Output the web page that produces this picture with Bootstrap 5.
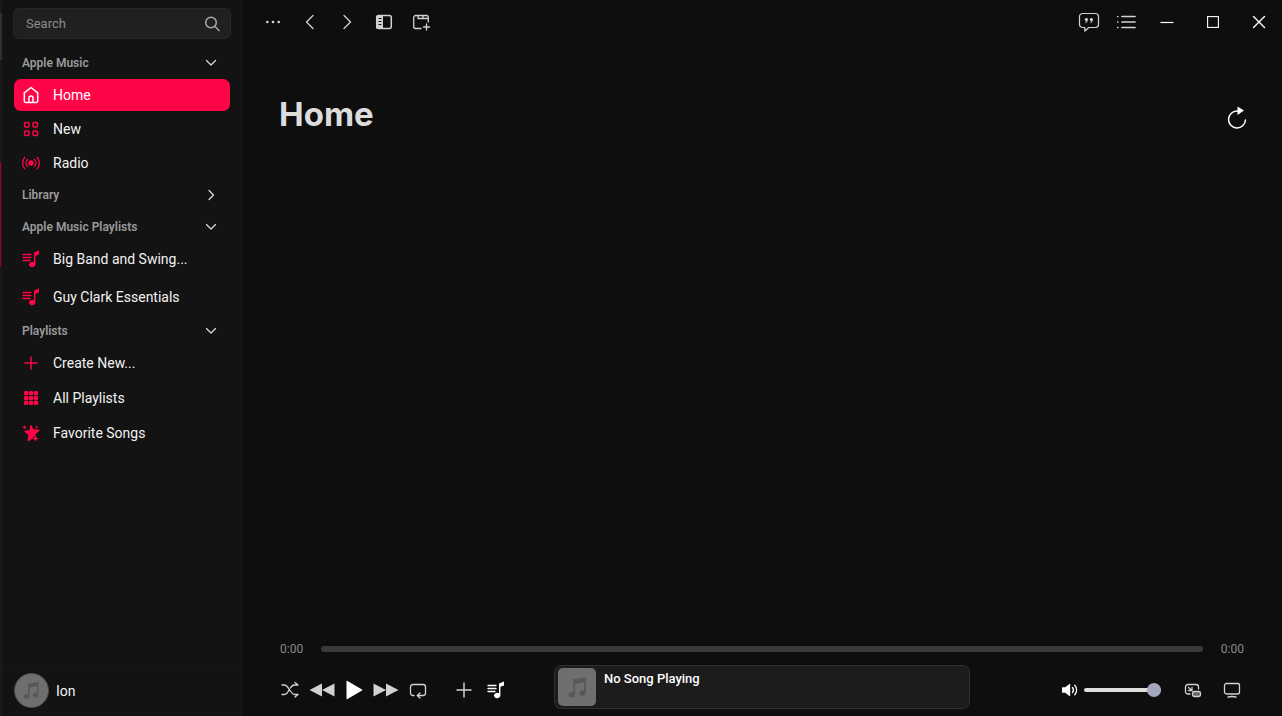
<!DOCTYPE html>
<html lang="en" data-bs-theme="dark">
<head>
<meta charset="utf-8">
<meta name="viewport" content="width=device-width, initial-scale=1">
<title>Music</title>
<link href="https://cdn.jsdelivr.net/npm/bootstrap@5.3.0/dist/css/bootstrap.min.css" rel="stylesheet">
<style>
:root { --accent: #ff0548; --side: #131313; --bg: #0e0e0e; }
body { font-family: Roboto, Inter, sans-serif; background: var(--bg); color: #dcdcdc; font-size: 14px; line-height: 20px; }
svg { display: block; flex: none; fill: none; stroke: currentColor; stroke-width: 1.5; stroke-linecap: round; stroke-linejoin: round; }
svg .solid { fill: currentColor; stroke: none; }
.window-edge { width: 2px; background: linear-gradient(#1a1a1a 13px, #303030 13px 60px, #1a1a1a 60px 162px, transparent 162px 266px, #1a1a1a 266px), linear-gradient(90deg, #a3001f 1px, #1a1a1a 1px); }
.sidebar { width: 240px; background: var(--side); border-right: 1px solid #171717; }
.search-box { height: 31px; margin: 8px 10px 8px 11px; padding: 0 10px 0 12px; background: #202020; border: 1px solid #272727; border-radius: 6px; color: #aaa; }
.search-box input { font-size: 13px; color: #ccc; outline: 0; }
.search-box input::placeholder { color: #8d8d8d; opacity: 1; }
.section-head { height: 32px; padding: 0 24px 0 20px; color: #9a9a9a; font-size: 12px; font-weight: 600; border: 0; background: none; }
.section-head svg { color: #dedede; }
.side-list { padding: 0 11px 0 12px; gap: 3px; }
.side-list-main { gap: 2px; }
.side-list-wide { gap: 6px; padding-bottom: 2px; }
.side-link { height: 32px; padding: 0 8px; gap: 13px; color: #f2f2f2; border-radius: 7px; text-decoration: none; }
.side-link svg { color: var(--accent); }
.side-link.active { background: var(--accent); color: #fff; }
.side-link.active svg { color: #fff; }
.account { height: 52px; padding: 0 12px; gap: 7px; border-top: 1px solid #171717; color: #f2f2f2; }
.avatar { width: 35px; height: 35px; background: #6f6f6f; border: 1px solid #4c4c4c; color: #585858; }
.icon-btn { width: 37px; height: 44px; padding: 0; border: 0; background: none; color: #d2d2d2; display: flex; align-items: center; justify-content: center; }
.win-btn { width: 46px; color: #fff; }
.ctl { width: 32px; height: 32px; }
.page-head { padding: 48px 29px 0 37px; }
.page-head h1 { font-family: Inter, sans-serif; font-size: 33px; line-height: 44px; font-weight: 700; color: #dcdcdc; }
.player { padding: 0 38px 7px; }
.seek-row { gap: 18px; font-size: 12px; line-height: 16px; color: #8a8a8a; }
.slider { appearance: none; height: 6px; border-radius: 3px; background: #3a3a3c; margin: 0; }
.slider::-webkit-slider-thumb { appearance: none; width: 0; height: 0; }
.volume { width: 77px; height: 4px; background: #dededc; }
.volume::-webkit-slider-thumb { width: 14px; height: 14px; border-radius: 50%; background: #a5a8bd; }
.deck { display: grid; grid-template-columns: minmax(0, 1fr) minmax(200px, 416px) minmax(0, 1fr); margin-top: 8px; align-items: center; }
.deck-left, .deck-right { padding-top: 6px; }
.deck-left { margin-left: -6px; }
.deck-right { margin-right: -4px; }
.now-playing { height: 44px; padding: 2px 3px; gap: 8px; background: #1c1c1c; border: 1px solid #303030; border-radius: 7px; color: #fff; font-size: 13px; font-weight: 500; line-height: 22px; }
.cover { width: 38px; height: 38px; border-radius: 5px; background: #6f6f6f; color: #585858; }
</style>
</head>
<body class="vh-100 d-flex overflow-hidden">
<svg class="d-none" xmlns="http://www.w3.org/2000/svg">
  <symbol id="note" viewBox="0 0 24 24"><path class="solid" d="M8 4.200 20 2v15.200a3.200 2.700 0 1 1-1.700-2.300V7L9.700 8.500v10.300a3.200 2.700 0 1 1-1.700-2.300z"/></symbol>
  <symbol id="tracks" viewBox="0 0 18 18"><path d="M1 4.500h8M1 7.500h8M1 10.500h7" stroke-width="1.300"/><path class="solid" d="M12 2.500 17 .5v4l-3.600 1.300v8.700a3.200 2.700 0 1 1-1.400-2.200z"/></symbol>
  <symbol id="down" viewBox="0 0 12 12"><path d="m1.500 3.500 4.500 4.500 4.500-4.500" stroke-width="1.200"/></symbol>
</svg>

<div class="window-edge"></div>
<aside class="sidebar d-flex flex-column flex-shrink-0">
  <label class="search-box d-flex align-items-center">
    <input type="search" class="border-0 bg-transparent p-0 flex-grow-1" style="min-width:0" placeholder="Search" aria-label="Search">
    <svg width="16" height="16" viewBox="0 0 16 16"><circle cx="7" cy="6.500" r="5.300"/><path d="m11 10.500 4 4"/></svg>
  </label>
  <nav class="d-flex flex-column flex-grow-1">
    <button class="section-head d-flex align-items-center justify-content-between">Apple Music <svg width="12" height="12"><use href="#down"/></svg></button>
    <div class="side-list side-list-main d-flex flex-column">
      <a href="#" class="side-link active d-flex align-items-center"><svg width="18" height="18" viewBox="0 0 18 18"><path d="M2.300 6.800 9 1.500l6.700 5.300v8.200a1.500 1.500 0 0 1-1.500 1.500H3.800A1.500 1.500 0 0 1 2.300 15z"/><path d="M7 16v-4a2 2 0 0 1 4 0v4"/></svg>Home</a>
      <a href="#" class="side-link d-flex align-items-center"><svg width="18" height="18" viewBox="0 0 18 18"><rect x="2.500" y="2.500" width="4.500" height="4.500" rx="1"/><rect x="11" y="2.500" width="4.500" height="4.500" rx="1"/><rect x="2.500" y="11" width="4.500" height="4.500" rx="1"/><rect x="11" y="11" width="4.500" height="4.500" rx="1"/></svg>New</a>
      <a href="#" class="side-link d-flex align-items-center"><svg width="18" height="18" viewBox="0 0 18 18"><circle class="solid" cx="9" cy="9" r="2.700"/><path d="M5.500 5.500a5 5 0 0 0 0 7M12.500 5.500a5 5 0 0 1 0 7M2.700 3.300a9 9 0 0 0 0 11.400M15.300 3.300a9 9 0 0 1 0 11.400" stroke-width="1.300"/></svg>Radio</a>
    </div>
    <button class="section-head d-flex align-items-center justify-content-between">Library <svg width="12" height="12" viewBox="0 0 12 12"><path d="m4 1.500 4.500 4.500L4 10.500" stroke-width="1.200"/></svg></button>
    <button class="section-head d-flex align-items-center justify-content-between">Apple Music Playlists <svg width="12" height="12"><use href="#down"/></svg></button>
    <div class="side-list side-list-wide d-flex flex-column">
      <a href="#" class="side-link d-flex align-items-center"><svg width="18" height="18"><use href="#tracks"/></svg>Big Band and Swing...</a>
      <a href="#" class="side-link d-flex align-items-center"><svg width="18" height="18"><use href="#tracks"/></svg>Guy Clark Essentials</a>
    </div>
    <button class="section-head d-flex align-items-center justify-content-between">Playlists <svg width="12" height="12"><use href="#down"/></svg></button>
    <div class="side-list d-flex flex-column">
      <a href="#" class="side-link d-flex align-items-center"><svg width="18" height="18" viewBox="0 0 18 18"><path d="M9 3v12M3 9h12"/></svg>Create New...</a>
      <a href="#" class="side-link d-flex align-items-center"><svg width="18" height="18" viewBox="0 0 18 18"><g class="solid"><rect x="2" y="2" width="4.300" height="4.300" rx="1.300"/><rect x="6.900" y="2" width="4.300" height="4.300" rx="1.300"/><rect x="11.800" y="2" width="4.300" height="4.300" rx="1.300"/><rect x="2" y="6.900" width="4.300" height="4.300" rx="1.300"/><rect x="6.900" y="6.900" width="4.300" height="4.300" rx="1.300"/><rect x="11.800" y="6.900" width="4.300" height="4.300" rx="1.300"/><rect x="2" y="11.800" width="4.300" height="4.300" rx="1.300"/><rect x="6.900" y="11.800" width="4.300" height="4.300" rx="1.300"/><rect x="11.800" y="11.800" width="4.300" height="4.300" rx="1.300"/></g></svg>All Playlists</a>
      <a href="#" class="side-link d-flex align-items-center"><svg width="18" height="18" viewBox="0 0 18 18"><path class="solid" d="M8 1.500q.8-1.200 1.500.1l1.900 3.700 5.200.2q1.500.4.500 1.600l-3.700 3.100.3 1.700-2.200.7-1 1.900-3.700 2.400q-1.500.7-1.300-.9l.9-4.700-3.500-3.200q-1-1.200.5-1.500l4.300-.3zM2.500 1.200l.8 1.300 1.500.8-1.500.8-.8 1.400-.8-1.400L.2 3.300l1.500-.8zM14.600 1.300l.6 1.100 1.100.6-1.100.6-.6 1.100-.6-1.100-1.100-.6 1.100-.6zM13.500 11.500l1.100 1.900 2.100 1.100-2.100 1-1.100 2-1.100-2-2.100-1 2.100-1.100z"/></svg>Favorite Songs</a>
    </div>
  </nav>
  <div class="account d-flex align-items-center">
    <div class="avatar rounded-circle d-flex align-items-center justify-content-center"><svg width="21" height="21"><use href="#note"/></svg></div>
    Ion
  </div>
</aside>

<main class="d-flex flex-column flex-grow-1" style="min-width:0">
  <header class="d-flex justify-content-between">
    <div class="d-flex" style="padding-left:12px">
      <button class="icon-btn" aria-label="More"><svg width="18" height="18" viewBox="0 0 18 18"><g class="solid"><circle cx="3.300" cy="9" r="1.300"/><circle cx="9" cy="9" r="1.300"/><circle cx="14.700" cy="9" r="1.300"/></g></svg></button>
      <button class="icon-btn" aria-label="Back"><svg width="18" height="18" viewBox="0 0 18 18"><path d="M12 2.500 5.500 9l6.500 6.500" stroke-width="1.300"/></svg></button>
      <button class="icon-btn" aria-label="Forward"><svg width="18" height="18" viewBox="0 0 18 18"><path d="M6 2.500 12.500 9 6 15.500" stroke-width="1.300"/></svg></button>
      <button class="icon-btn" aria-label="Toggle sidebar"><svg width="18" height="18" viewBox="0 0 18 18"><rect x="1.700" y="2.500" width="14.600" height="13" rx="2"/><path class="solid" d="M3.500 2H8v14H3.500A2.500 2.500 0 0 1 1 13.500v-9A2.500 2.500 0 0 1 3.500 2"/><path d="M4 5.500h2M4 8.500h2M4 11.500h2" stroke="#0e0e0e" stroke-width="1.200"/></svg></button>
      <button class="icon-btn" aria-label="New tab"><svg width="18" height="18" viewBox="0 0 18 18"><path d="M9 15.500H3.700a2 2 0 0 1-2-2v-9a2 2 0 0 1 2-2h10.600a2 2 0 0 1 2 2V9M6 2.500v3h10M11 2.500v3M14.500 11v6M11.500 14h6" stroke-width="1.300"/></svg></button>
    </div>
    <div class="d-flex">
      <button class="icon-btn" aria-label="Lyrics"><svg width="22" height="22" viewBox="0 0 22 22"><path d="M4.500 2.500h13a3 3 0 0 1 3 3v8a3 3 0 0 1-3 3h-6.700l-4 3.500v-3.500H4.500a3 3 0 0 1-3-3v-8a3 3 0 0 1 3-3z" stroke-width="1.200"/><path class="solid" d="M9.900 8.300c0 2-1 3.500-2.500 4l-.3-.6c.8-.4 1.200-.9 1.300-1.600a1.600 1.600 0 1 1 1.500-1.800M14.900 8.300c0 2-1 3.500-2.500 4l-.3-.6c.8-.4 1.200-.9 1.300-1.600a1.600 1.600 0 1 1 1.500-1.800"/></svg></button>
      <button class="icon-btn" aria-label="Queue"><svg width="20" height="18" viewBox="0 0 20 18"><path d="M6 3.500h13M6 9h13M6 14.500h13M1.700 3.500h.1M1.700 9h.1M1.700 14.500h.1" stroke-width="1.700"/></svg></button>
      <button class="icon-btn win-btn" aria-label="Minimize"><svg width="14" height="14" viewBox="0 0 14 14"><path d="M.500 7.500h13" stroke-width="1.200" stroke-linecap="butt"/></svg></button>
      <button class="icon-btn win-btn" aria-label="Maximize"><svg width="12" height="12" viewBox="0 0 12 12"><rect x=".6" y=".6" width="10.800" height="10.800" stroke-width="1.100" stroke-linejoin="miter"/></svg></button>
      <button class="icon-btn win-btn" aria-label="Close"><svg width="14" height="14" viewBox="0 0 14 14"><path d="m1.500 1.500 11 11M12.500 1.500l-11 11" stroke-width="1.400"/></svg></button>
    </div>
  </header>

  <section class="page-head d-flex justify-content-between flex-grow-1">
    <h1 class="m-0">Home</h1>
    <button class="icon-btn ctl text-white" style="height:52px" aria-label="Reload"><svg width="24" height="24" viewBox="0 0 24 24"><path d="M14 5h-2a8.500 8.500 0 1 0 8.500 9" stroke-width="1.500"/><path class="solid" d="M12.500.5 19 4.500l-6.500 4.500z"/></svg></button>
  </section>

  <footer class="player">
    <div class="seek-row d-flex align-items-center">
      <span>0:00</span>
      <input type="range" class="slider flex-grow-1" style="min-width:0" value="0" aria-label="Seek">
      <span>0:00</span>
    </div>
    <div class="deck">
      <div class="deck-left d-flex align-items-center">
        <button class="icon-btn ctl" aria-label="Shuffle"><svg width="18" height="18" viewBox="0 0 18 18"><path d="M1 4h2.500c4 0 6 9.500 10 9.500H17M1 13.500h2.500c2 0 3.300-2 4.500-4.500M9.500 7c1-2 2.200-3 4-3H17M14 1.500 17 4M14 16l3-2.500" stroke-width="1.300"/></svg></button>
        <button class="icon-btn ctl" aria-label="Previous"><svg width="26" height="16" viewBox="0 0 26 16"><path class="solid" d="M13 1.500v13L.5 8zM25.500 1.500v13L13 8z"/></svg></button>
        <button class="icon-btn ctl text-white" aria-label="Play"><svg width="18" height="20" viewBox="0 0 18 20"><path class="solid" d="M1.500 1.500q0-1 1-.5L17 9.500q.7.500 0 1L2.500 19q-1 .5-1-.5z"/></svg></button>
        <button class="icon-btn ctl" aria-label="Next"><svg width="26" height="16" viewBox="0 0 26 16"><path class="solid" d="M.5 1.500v13L13 8zM13 1.500v13L25.500 8z"/></svg></button>
        <button class="icon-btn ctl" aria-label="Repeat"><svg width="18" height="18" viewBox="0 0 18 18"><path d="M5 14.500H4a2.500 2.500 0 0 1-2.500-2.500V6A2.500 2.500 0 0 1 4 3.500h10A2.500 2.500 0 0 1 16.500 6v6a2.500 2.500 0 0 1-2.500 2.500H8.500M11 12l-2.800 2.500L11 17" stroke-width="1.300"/></svg></button>
        <button class="icon-btn ctl" style="margin-left:14px" aria-label="Add"><svg width="18" height="18" viewBox="0 0 18 18"><path d="M9 2v14M2 9h14"/></svg></button>
        <button class="icon-btn ctl text-white" aria-label="Add to playlist"><svg width="18" height="18"><use href="#tracks"/></svg></button>
      </div>
      <div class="now-playing d-flex">
        <div class="cover d-flex align-items-center justify-content-center"><svg width="25" height="25"><use href="#note"/></svg></div>
        <span>No Song Playing</span>
      </div>
      <div class="deck-right d-flex align-items-center justify-content-end">
        <svg class="text-white" width="18" height="18" viewBox="0 0 18 18"><path class="solid" d="M1.500 6.300h2.700L8.500 3q.7-.4.700.4v11.200q0 .8-.7.400l-4.300-3.300H1.500q-.5 0-.5-.5V6.800q0-.5.500-.5"/><path d="M11.500 6.500a4 4 0 0 1 0 5M13.700 4.200a7 7 0 0 1 0 9.600" stroke-width="1.300"/></svg>
        <input type="range" class="slider volume" style="margin-left:5px" value="100" aria-label="Volume">
        <button class="icon-btn ctl" style="margin-left:16px" aria-label="Mini player"><svg width="18" height="18" viewBox="0 0 18 18"><path d="M6 13H4a2.500 2.500 0 0 1-2.500-2.500V6A2.500 2.500 0 0 1 4 3.500h8A2.500 2.500 0 0 1 14.500 6v2M4.500 6.500 8 9.500M8 6.500v3H4.500" stroke-width="1.300"/><rect x="8.500" y="10.500" width="8" height="5" rx="1.800" fill="#666" stroke-width="1.300"/></svg></button>
        <button class="icon-btn ctl" style="margin-left:7px" aria-label="Full screen"><svg width="18" height="18" viewBox="0 0 18 18"><rect x="1.500" y="2.500" width="15" height="10.500" rx="2" stroke-width="1.300"/><path d="M5 16q4-1 8 0" stroke-width="1.300"/></svg></button>
      </div>
    </div>
  </footer>
</main>
<script src="https://cdn.jsdelivr.net/npm/bootstrap@5.3.0/dist/js/bootstrap.bundle.min.js"></script>
</body>
</html>
